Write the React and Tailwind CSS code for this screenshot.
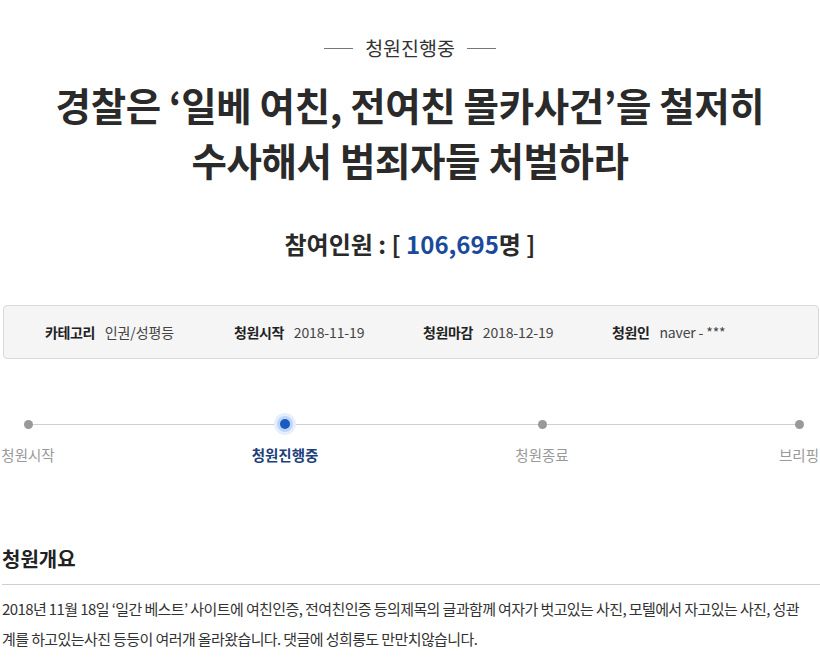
import React from 'react';

const steps = [
  { label: '청원시작', active: false },
  { label: '청원진행중', active: true },
  { label: '청원종료', active: false },
  { label: '브리핑', active: false },
];

const info = [
  ['카테고리', '인권/성평등'],
  ['청원시작', '2018-11-19'],
  ['청원마감', '2018-12-19'],
  ['청원인', 'naver - ***'],
];

function App() {
  return (
    <div
      className="w-[820px] overflow-hidden bg-white text-[#333]"
      style={{ fontFamily: '"Noto Sans CJK KR", "Noto Sans", sans-serif' }}
    >
      <div className="pt-[35px] flex items-center justify-center gap-[12px]">
        <span className="w-[29px] h-px bg-[#777]" />
        <span className="text-[19.5px] leading-[26px] text-[#333]">청원진행중</span>
        <span className="w-[29px] h-px bg-[#777]" />
      </div>

      <h1 className="mt-[16px] text-center text-[38.5px] leading-[55px] font-bold text-[#2a2a2a] tracking-[-0.01em]">
        경찰은 ‘일베 여친, 전여친 몰카사건’을 철저히
        <br />
        수사해서 범죄자들 처벌하라
      </h1>

      <p className="mt-[41px] text-center text-[24px] leading-[32px] font-bold text-[#2a2a2a]">
        참여인원 : [ <span className="text-[#1b4a9b]">106,695</span>명 ]
      </p>

      <div className="mt-[45px] ml-[3px] mr-px h-[54px] rounded-[4px] border border-[#d9d9d9] bg-[#f5f5f5] flex items-center pl-[41px]">
        {info.map(([k, v]) => (
          <div key={k} className="w-[189px] flex items-center gap-[10px] text-[14px]">
            <span className="font-bold text-[#222] tracking-[-0.03em]">{k}</span>
            <span className="text-[#444] tracking-[-0.01em]">{v}</span>
          </div>
        ))}
      </div>

      <div className="mt-[55px] ml-[28px] w-[771px]">
        <div className="relative h-[20px] flex items-center justify-between">
          <div className="absolute left-0 right-0 top-1/2 h-px bg-[#cfcfcf]" />
          {steps.map((s) => (
            <div key={s.label} className="relative w-0 flex justify-center">
              {s.active ? (
                <span className="shrink-0 w-[10px] h-[10px] rounded-full bg-[#1a5bbf] shadow-[0_0_0_3px_#bfd5f8,0_0_0_6px_#e6effd]" />
              ) : (
                <span className="shrink-0 w-[9px] h-[9px] rounded-full bg-[#999]" />
              )}
            </div>
          ))}
        </div>
        <div className="mt-[11px] flex justify-between">
          {steps.map((s) => (
            <div key={s.label} className="w-0 flex justify-center">
              <span
                className={
                  s.active
                    ? 'shrink-0 whitespace-nowrap text-[14.5px] leading-[20px] font-bold text-[#1d3f7a]'
                    : 'shrink-0 whitespace-nowrap text-[14.5px] leading-[20px] text-[#999]'
                }
              >
                {s.label}
              </span>
            </div>
          ))}
        </div>
      </div>

      <section className="mt-[80px] pl-[2px]">
        <h2 className="text-[20px] leading-[28px] font-bold text-[#222] pb-[11px] border-b border-[#cfcfcf]">
          청원개요
        </h2>
        <p className="mt-[9px] text-[15px] leading-[30px] tracking-[-0.04em] text-[#333] whitespace-nowrap">
          2018년 11월 18일 ‘일간 베스트’ 사이트에 여친인증, 전여친인증 등의제목의 글과함께 여자가 벗고있는 사진, 모텔에서 자고있는 사진, 성관
          <br />
          계를 하고있는사진 등등이 여러개 올라왔습니다. 댓글에 성희롱도 만만치않습니다.
        </p>
      </section>
    </div>
  );
}

export default App;
